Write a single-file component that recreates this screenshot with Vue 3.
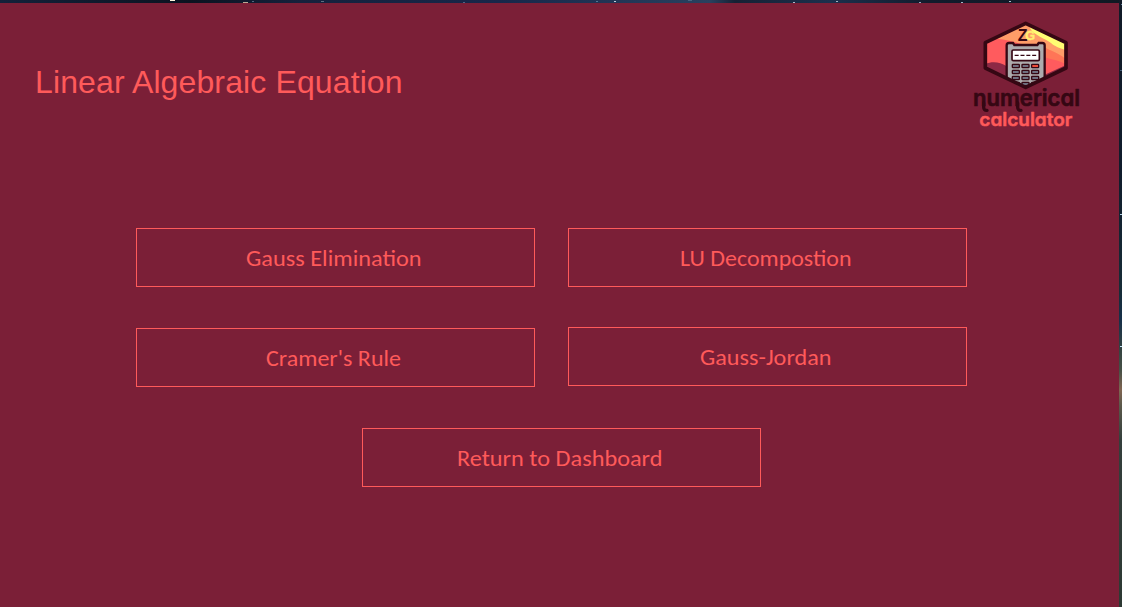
<script setup>
const methods = [
  { label: 'Gauss Elimination', id: 'gauss', width: 175.5 },
  { label: 'LU Decompostion', id: 'lu', width: 171.5 },
  { label: "Cramer's Rule", id: 'cramer', width: 135 },
  { label: 'Gauss-Jordan', id: 'jordan', width: 131.5 },
  { label: 'Return to Dashboard', id: 'return', width: 205.5 },
]
const keys = [0, 1, 2, 3].flatMap(r => [0, 1, 2].map(c => ({ x: 142 + c * 29, y: 148 + r * 18, hot: r === 0 && c === 2 })))
const stars = [
  [170, 0, 5, '#fff5dc'], [243, 2, 5, '#b9a994'], [321, 1, 3, '#5f6d80'], [252, 1, 2, '#53657d'],
  [463, 2, 2, '#4b6585'], [596, 1, 2, '#527693'], [614, 1, 2, '#c2d2df'], [688, 0, 4, '#45637f'],
  [793, 2, 2, '#a9b9ca'], [836, 1, 2, '#a2b0bf'], [919, 2, 2, '#8fa5bb'], [961, 2, 2, '#a0b7ca'], [1009, 1, 2, '#a5becd'],
  [1121, 4, 1, '#68859f'], [1120, 70, 2, '#445d78'], [1120, 214, 2, '#b4d4e7'], [1120, 346, 2, '#c1e1f4'],
]
</script>

<template>
  <div class="desktop">
    <svg class="sky" width="1122" height="607" aria-hidden="true">
      <rect v-for="s in stars" :key="s[0] + '-' + s[1]" :x="s[0]" :y="s[1]" :width="s[2]" height="1" :fill="s[3]" />
    </svg>
    <main class="window">
      <header>
        <h1>Linear Algebraic Equation</h1>
        <svg class="logo" viewBox="0 0 375 360" role="img">
          <defs>
            <clipPath id="hexagon"><path d="M182 25 303 83V159L182 217 61 159V83Z" /></clipPath>
          </defs>
          <g clip-path="url(#hexagon)">
            <path fill="#ff9c68" d="M50 15H315V225H50Z" />
            <path fill="#fffd73" d="M182 15H315V110C285 99 271 96 258 84C245 73 220 66 200 47Z" />
            <path fill="#ff5b5e" d="M50 76C83 67 109 72 145 80C187 94 230 89 246 124C270 134 289 132 315 153V225H50Z" />
            <path fill="#ff7557" d="M230 86C247 111 277 104 315 143V157C285 132 259 136 230 123Z" />
            <path fill="#8d2945" d="M50 151C80 137 102 140 125 154C161 179 201 187 239 179L315 145V225H50Z" />
            <path d="M125 225V91Q125 84 132 84H144L148 90H217L221 84H232Q239 84 239 91V225Z" fill="#adabad" stroke="#350713" stroke-width="7" />
            <rect x="141" y="105" width="82" height="32" rx="4" fill="#fff" stroke="#350713" stroke-width="5" />
            <path d="M149 121H214" stroke="#350713" stroke-width="4" stroke-dasharray="12 5.5" />
            <rect v-for="k in keys" :key="k.x + '-' + k.y" :x="k.x" :y="k.y" width="21" height="10" rx="2" :fill="k.hot ? '#ed4d3a' : '#6f7080'" stroke="#350713" stroke-width="4" />
          </g>
          <path d="M182 25 303 83V159L182 217 61 159V83Z" fill="none" stroke="#350713" stroke-width="11" stroke-linejoin="round" />
          <text class="initial dark" x="158" y="77">Z</text>
          <text class="initial yellow" x="181" y="75">G</text>
          <text class="numerical" x="24" y="272" textLength="321" lengthAdjust="spacingAndGlyphs">numerical</text>
          <path d="M56 264V276Q56 287 66 286M158 264V276Q158 287 168 286" fill="none" stroke="#350713" stroke-width="10" stroke-linecap="round" />
          <text class="calculator" x="43" y="333" textLength="279" lengthAdjust="spacingAndGlyphs">calculator</text>
        </svg>
      </header>
      <nav>
        <button v-for="m in methods" :key="m.id" :class="m.id" type="button">
          <svg :width="m.width" height="30" overflow="visible"><text x="0" y="23" :textLength="m.width" lengthAdjust="spacingAndGlyphs">{{ m.label }}</text></svg>
        </button>
      </nav>
    </main>
  </div>
</template>

<style>
body { margin: 0; overflow: hidden; }
</style>

<style scoped>
.desktop {
  position: relative;
  box-sizing: border-box;
  width: 1122px;
  height: 607px;
  padding: 3px 3px 0 0;
  background:
    linear-gradient(180deg, #111b28 0, #101c2c 170px, #172c37 290px, #17304a 320px, #354442 350px, #465046 370px, #806552 390px, #5c594b 405px, #343f3c 440px, #2d3933 607px) right / 3px 607px no-repeat,
    linear-gradient(90deg, #13213a 0, #0b1320 190px, #15213c 300px, #17274a 500px, #29415f 710px, #162134 735px, #1b304d 830px, #121b2c 930px, #101923 1122px);
}
.sky { position: absolute; inset: 0; }
.window { height: 604px; background: #7b1f37; overflow: hidden; }
header { display: flex; justify-content: space-between; height: 225px; padding-left: 35px; }
h1 { margin: 60px 0 0; font: 400 32px/38px "Liberation Sans", Arial, sans-serif; letter-spacing: 0.12px; color: #ff5a5a; }
.logo { width: 125px; height: 120px; margin: 12px 29px 0 0; flex: none; }
.logo .initial { font: 700 48px "Liberation Sans", sans-serif; }
.dark { fill: #350713; }
.logo .yellow { fill: #ffee70; stroke: #ffee70; stroke-width: 1; font-size: 38px; }
.logo .numerical { font: 600 69px Inter, sans-serif; font-feature-settings: "cv11"; fill: #350713; stroke: #350713; stroke-width: 2; stroke-linejoin: round; }
.logo .calculator { font: 600 55px Inter, sans-serif; font-feature-settings: "cv11"; fill: #ff5a5a; stroke: #ff5a5a; stroke-width: 1.5; stroke-linejoin: round; }
nav { display: grid; grid-template-columns: 399px 399px; grid-template-rows: 59px 59px 59px; gap: 41px 33px; padding-left: 136px; }
button { display: flex; align-items: center; justify-content: center; box-sizing: border-box; width: 399px; height: 59px; padding: 0 3px 0 0; border: 1px solid #ff5a5a; border-radius: 0; background: transparent; }
button text { font: 400 22px Carlito, Lato, sans-serif; fill: #ff5a5a; }
.cramer { padding-right: 5px; }
.jordan { margin-top: -1px; }
.return { grid-column: 1 / -1; margin-left: 226px; }
</style>
